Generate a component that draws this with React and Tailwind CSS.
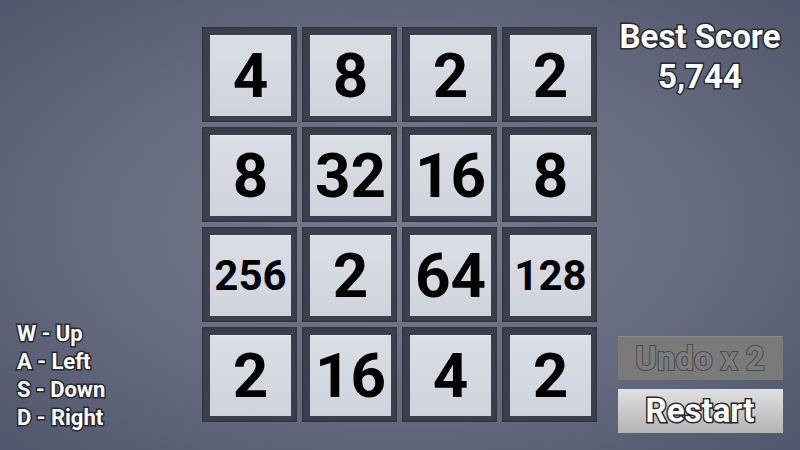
import React from 'react';

const board = [
    [4, 8, 2, 2],
    [8, 32, 16, 8],
    [256, 2, 64, 128],
    [2, 16, 4, 2],
];

const outlined = '[-webkit-text-stroke:3px_#262833] [paint-order:stroke_fill]';

const Tile = ({ value }) => {
    const size = value >= 100 ? 'text-[42px]' : 'text-[62px]';
    return (
        <div className="w-[95px] h-[95px] bg-[#3c3f4c] pt-[8px] pl-[8px] pr-[6px] pb-[6px] shadow-[inset_0_0_3px_rgba(0,0,0,0.4)]">
            <div className="w-full h-full flex items-center justify-center bg-gradient-to-b from-[#dcdee6] to-[#d0d3dd] border-t border-[#e9ebf1]">
                <span className={`${size} font-bold text-black leading-none`}>{value}</span>
            </div>
        </div>
    );
};

export default function App() {
    return (
        <div className="w-[800px] h-[450px] flex bg-[radial-gradient(ellipse_at_center,#767b8d_0%,#666b7f_55%,#50566b_100%)] font-['Roboto',sans-serif] overflow-hidden">
            <div className="w-[202px] flex flex-col justify-end pl-[17px] pb-[18px]">
                <div className={`text-white font-bold text-[22px] leading-[28px] ${outlined}`}>
                    <p>W - Up</p>
                    <p>A - Left</p>
                    <p>S - Down</p>
                    <p>D - Right</p>
                </div>
            </div>

            <div className="pt-[27px] grid grid-cols-4 gap-[5px] h-fit">
                {board.flat().map((v, i) => (
                    <Tile key={i} value={v} />
                ))}
            </div>

            <div className="flex-1 flex flex-col items-center justify-between pt-[17px] pb-[17px] pl-[3px]">
                <div className={`text-white font-bold text-[33px] leading-[40px] text-center ${outlined}`}>
                    <p>Best Score</p>
                    <p>5,744</p>
                </div>
                <div className="flex flex-col gap-[9px] w-[165px]">
                    <div className="h-[44px] flex items-center justify-center bg-[#7a7a7a] border-t border-[#8a8a8a] text-[#7c7c7c] font-bold text-[33px] [-webkit-text-stroke:2px_#4c4c4c] [paint-order:stroke_fill]">
                        Undo x 2
                    </div>
                    <div className={`h-[44px] flex items-center justify-center bg-gradient-to-b from-[#e0e0e0] to-[#b4b4b4] text-white font-bold text-[33px] ${outlined}`}>
                        Restart
                    </div>
                </div>
            </div>
        </div>
    );
}
